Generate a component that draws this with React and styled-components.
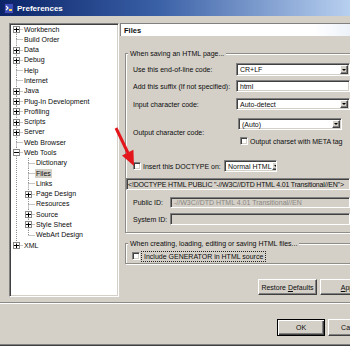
import React from "react";
import styled, { createGlobalStyle, css } from "styled-components";

const GlobalStyle = createGlobalStyle`
  html, body {
    margin: 0;
    padding: 0;
  }
  body {
    font-family: "Liberation Sans", Arial, sans-serif;
    font-size: 7px;
    color: #0c0c0c;
    background: #d4d0c8;
  }
`;

const ROW = 10.29;

const sunken = css`
  border: 1px solid;
  border-color: #808080 #ffffff #ffffff #808080;
  box-shadow: inset 1px 1px 0 #404040, inset -1px -1px 0 #d4d0c8;
`;

const raised = css`
  border: 1px solid;
  border-color: #ffffff #404040 #404040 #ffffff;
  box-shadow: inset -1px -1px 0 #808080;
`;

const Window = styled.div`
  position: relative;
  width: 350px;
  height: 346px;
  overflow: hidden;
  background: #d4d0c8;
  display: flex;
  flex-direction: column;
  box-shadow: inset 0 -1px 0 #404040, inset 0 -2px 0 #808080;
`;

const TitleBar = styled.div`
  height: 16px;
  flex: none;
  display: flex;
  align-items: center;
  gap: 3px;
  padding-left: 4px;
  background: linear-gradient(to right, #0b2468 0%, #3a60a6 45%, #b8d0f0 100%);
  color: #fff;
  font-weight: bold;
  font-size: 8px;
`;

const Body = styled.div`
  display: flex;
  align-items: flex-start;
  gap: 1px;
  height: 286px;
  box-sizing: border-box;
  padding: 7px 0 0 9px;
  flex: none;
`;

/* ---- tree ---- */

const TreePanel = styled.div`
  width: 110px;
  height: 274px;
  flex: none;
  box-sizing: border-box;
  background: #fff;
  border: 1px solid;
  border-color: #808080 #ffffff #ffffff #808080;
  box-shadow: inset 1px 1px 0 #404040, inset -1px -1px 0 #d4d0c8;
  overflow: hidden;
`;

const TreeRow = styled.div`
  display: flex;
  align-items: center;
  height: ${ROW}px;
  white-space: nowrap;
`;

const BranchSvg = styled.svg`
  flex: none;
  display: block;
  line {
    stroke: #8e8e8e;
    stroke-width: 1;
    stroke-dasharray: 1 1;
  }
`;

const TreeLabel = styled.span`
  padding: 0 1px;
  line-height: 9px;
  background: ${(p) => (p.$selected ? "#d4d0c8" : "transparent")};
`;

const tree = [
  { label: "Workbench", level: 0, kids: true, first: true },
  { label: "Build Order", level: 0 },
  { label: "Data", level: 0, kids: true },
  { label: "Debug", level: 0, kids: true },
  { label: "Help", level: 0 },
  { label: "Internet", level: 0 },
  { label: "Java", level: 0, kids: true },
  { label: "Plug-In Development", level: 0, kids: true },
  { label: "Profiling", level: 0, kids: true },
  { label: "Scripts", level: 0, kids: true },
  { label: "Server", level: 0, kids: true },
  { label: "Web Browser", level: 0 },
  { label: "Web Tools", level: 0, kids: true, open: true },
  { label: "Dictionary", level: 1 },
  { label: "Files", level: 1, selected: true },
  { label: "Links", level: 1 },
  { label: "Page Design", level: 1, kids: true },
  { label: "Resources", level: 1 },
  { label: "Source", level: 1, kids: true },
  { label: "Style Sheet", level: 1, kids: true },
  { label: "WebArt Design", level: 1, last: true },
  { label: "XML", level: 0, kids: true, last: true },
];

function Branch({ level, kids, open, first, last }) {
  const w = 13 + 12 * level;
  const cx = 12 * level + 6.5;
  const cy = 5.5;
  return (
    <BranchSvg width={w} height={ROW} viewBox={`0 0 ${w} ${ROW}`}>
      {level > 0 && <line x1={6.5} y1={0} x2={6.5} y2={ROW} />}
      {!first && <line x1={cx} y1={0} x2={cx} y2={cy} />}
      {!last && <line x1={cx} y1={cy} x2={cx} y2={ROW} />}
      <line x1={cx} y1={cy} x2={w} y2={cy} />
      {kids && (
        <g>
          <rect x={cx - 3} y={2.5} width={6} height={6} fill="#fff" stroke="#8a8a8a" />
          <path d={`M${cx - 2.5} 5.5H${cx + 2.5}`} stroke="#000" />
          {!open && <path d={`M${cx} 3.5V8`} stroke="#000" />}
        </g>
      )}
    </BranchSvg>
  );
}

/* ---- right page ---- */

const RightPanel = styled.div`
  width: 262px;
  flex: none;
  display: flex;
  flex-direction: column;
`;

const PageHeader = styled.div`
  height: 13px;
  box-sizing: border-box;
  border-top: 1px solid #808080;
  border-left: 1px solid #808080;
  background: linear-gradient(to right, #ffffff 74%, #dde7f6 100%);
  display: flex;
  align-items: center;
  padding-left: 3px;
  font-weight: bold;
  font-size: 7.5px;
`;

const Group = styled.div`
  margin: ${(p) => p.$top}px 26px 0 5px;
  border: 1px solid #8f8d88;
  box-shadow: inset 1px 1px 0 #fff, 1px 1px 0 #fff;
  padding: 0 5px ${(p) => p.$bottom}px 7px;
  display: flex;
  flex-direction: column;
`;

const Legend = styled.span`
  align-self: flex-start;
  margin: -5px 0 0 -5px;
  padding: 0 2px;
  height: 9px;
  line-height: 9px;
  background: #d4d0c8;
  white-space: nowrap;
`;

const Row = styled.div`
  display: flex;
  align-items: center;
  height: ${(p) => p.$h || 12}px;
  margin-top: ${(p) => p.$mt || 0}px;
  margin-left: ${(p) => p.$ml || 0}px;
  flex: none;
`;

const FieldLabel = styled.span`
  width: ${(p) => p.$w}px;
  flex: none;
  white-space: nowrap;
`;

const Field = styled.div`
  ${sunken}
  box-sizing: border-box;
  height: 100%;
  width: ${(p) => (p.$w ? `${p.$w}px` : "auto")};
  flex: ${(p) => (p.$w ? "none" : 1)};
  background: ${(p) => (p.$disabled ? "#d4d0c8" : "#fff")};
  color: ${(p) => (p.$muted ? "#8a8782" : "#0c0c0c")};
  letter-spacing: ${(p) => p.$ls || 0}px;
  display: flex;
  align-items: center;
  padding: 1px 1px 1px ${(p) => (p.$pl === undefined ? 3 : p.$pl)}px;
  white-space: nowrap;
  overflow: hidden;
`;

const DropButton = styled.span`
  margin-left: auto;
  align-self: stretch;
  width: 8px;
  flex: none;
  box-sizing: border-box;
  background: #d4d0c8;
  ${raised}
  display: flex;
  align-items: center;
  justify-content: center;
`;

const Caret = styled.span`
  width: 0;
  height: 0;
  border-left: 2px solid transparent;
  border-right: 2px solid transparent;
  border-top: 2px solid #000;
`;

const Check = styled.span`
  width: 8px;
  height: 8px;
  flex: none;
  box-sizing: border-box;
  ${sunken}
  background: #fff;
`;

const CheckText = styled.span`
  margin-left: ${(p) => p.$ml || 2}px;
  width: ${(p) => (p.$w ? `${p.$w}px` : "auto")};
  flex: none;
  white-space: nowrap;
  line-height: 9px;
  ${(p) =>
    p.$focus &&
    css`
      border: 1px dotted #222;
      padding: 0 2px;
    `}
`;

const Split = styled.div`
  display: flex;
  align-items: center;
  margin-top: ${(p) => p.$mt}px;
  flex: none;
`;

const Stack = styled.div`
  display: flex;
  flex-direction: column;
  width: ${(p) => p.$w}px;
  flex: none;
`;

const ButtonRow = styled.div`
  display: flex;
  justify-content: flex-end;
  gap: 3px;
  margin-top: ${(p) => p.$mt || 0}px;
  padding-right: 3px;
  width: ${(p) => (p.$w ? `${p.$w}px` : "auto")};
  box-sizing: border-box;
  flex: none;
`;

const Button = styled.button`
  font: inherit;
  color: #0c0c0c;
  width: ${(p) => p.$w}px;
  height: ${(p) => p.$h}px;
  padding: 0;
  flex: none;
  background: #d4d0c8;
  ${raised}
  ${(p) =>
    p.$default &&
    css`
      border: 1px solid #000;
      box-shadow: inset 1px 1px 0 #fff, inset -1px -1px 0 #404040,
        inset -2px -2px 0 #808080;
    `}
`;

const Separator = styled.div`
  flex: none;
  height: 0;
  border-top: 1px solid #8c8a85;
  border-bottom: 1px solid #fff;
`;

const Annotation = styled.svg`
  position: absolute;
  left: 0;
  top: 0;
  pointer-events: none;
`;

function Dropdown({ children, w }) {
  return (
    <Field $w={w}>
      {children}
      <DropButton>
        <Caret />
      </DropButton>
    </Field>
  );
}

function AppIcon() {
  return (
    <svg width="10" height="11" viewBox="0 0 10 11">
      <rect x="0.5" y="0.5" width="9" height="10" fill="#3a4fb8" stroke="#1a2470" />
      <path d="M2 3l2 2-2 2" fill="none" stroke="#fff" strokeWidth="1.2" />
      <rect x="5" y="6" width="3" height="2" fill="#ffd24a" />
    </svg>
  );
}

export default function App() {
  return (
    <>
      <GlobalStyle />
      <Window>
        <TitleBar>
          <AppIcon />
          Preferences
        </TitleBar>
        <Body>
          <TreePanel>
            {tree.map((item) => (
              <TreeRow key={item.label}>
                <Branch {...item} />
                <TreeLabel $selected={item.selected}>{item.label}</TreeLabel>
              </TreeRow>
            ))}
          </TreePanel>
          <RightPanel>
            <PageHeader>Files</PageHeader>
            <Group $top={17} $bottom={7}>
              <Legend>When saving an HTML page...</Legend>
              <Row $h={13} $mt={5}>
                <FieldLabel $w={103}>Use this end-of-line code:</FieldLabel>
                <Dropdown>CR+LF</Dropdown>
              </Row>
              <Row $mt={4}>
                <FieldLabel $w={103}>Add this suffix (If not specified):</FieldLabel>
                <Field>html</Field>
              </Row>
              <Row $mt={6}>
                <FieldLabel $w={103}>Input character code:</FieldLabel>
                <Dropdown>Auto-detect</Dropdown>
              </Row>
              <Split $mt={8}>
                <FieldLabel $w={105}>Output character code:</FieldLabel>
                <Stack $w={104}>
                  <Row>
                    <Dropdown>(Auto)</Dropdown>
                  </Row>
                  <Row $h={10} $mt={6} $ml={2}>
                    <Check />
                    <CheckText>Output charset with META tag</CheckText>
                  </Row>
                </Stack>
              </Split>
              <Row $mt={14}>
                <Check />
                <CheckText $w={81}>Insert this DOCTYPE on:</CheckText>
                <Dropdown w={53}>Normal HTML</Dropdown>
              </Row>
              <Row $mt={6} $ml={-7}>
                <Field $disabled $pl={1} $ls={-0.17}>
                  {'<!DOCTYPE HTML PUBLIC "-//W3C//DTD HTML 4.01 Transitional//EN">'}
                </Field>
              </Row>
              <Row $h={11} $mt={7}>
                <FieldLabel $w={37}>Public ID:</FieldLabel>
                <Field $disabled $muted>
                  -//W3C//DTD HTML 4.01 Transitional//EN
                </Field>
              </Row>
              <Row $mt={5}>
                <FieldLabel $w={37}>System ID:</FieldLabel>
                <Field $disabled />
              </Row>
            </Group>
            <Group $top={10} $bottom={2}>
              <Legend>When creating, loading, editing or saving HTML files...</Legend>
              <Row $h={10} $mt={3} $ml={-1}>
                <Check />
                <CheckText $focus $ml={1}>
                  Include GENERATOR in HTML source
                </CheckText>
              </Row>
            </Group>
            <ButtonRow $mt={15}>
              <Button $w={59} $h={16}>
                Restore <u>D</u>efaults
              </Button>
              <Button $w={59} $h={16}>
                <u>A</u>pply
              </Button>
            </ButtonRow>
          </RightPanel>
        </Body>
        <Separator />
        <ButtonRow $mt={15} $w={379}>
          <Button $w={48} $h={17} $default>
            OK
          </Button>
          <Button $w={48} $h={17}>
            Cancel
          </Button>
        </ButtonRow>
        <Annotation width="350" height="346" viewBox="0 0 350 346">
          <line x1="116" y1="128" x2="128" y2="153" stroke="#e3161c" strokeWidth="3" />
          <polygon points="134,166 122,155.5 133.4,149.8" fill="#e3161c" />
        </Annotation>
      </Window>
    </>
  );
}
